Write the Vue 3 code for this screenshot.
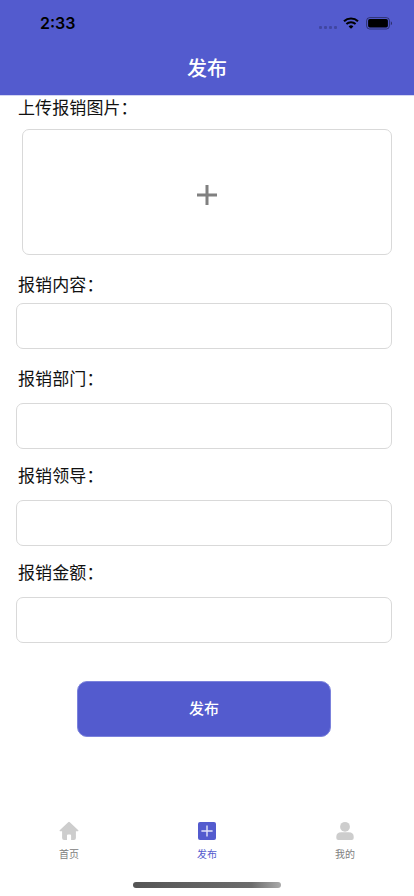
<script setup>
import { ref } from 'vue'

const fields = ref([
  { key: 'content', label: '报销内容', value: '' },
  { key: 'department', label: '报销部门', value: '' },
  { key: 'leader', label: '报销领导', value: '' },
  { key: 'amount', label: '报销金额', value: '' },
])
</script>

<template>
  <div class="page">
    <header class="header">
      <div class="status">
        <span class="time">2:33</span>
        <div class="signals">
          <div class="dots"><i v-for="n in 4" :key="n"></i></div>
          <svg class="wifi" viewBox="0 0 16 12" width="16" height="12">
            <path d="M1 4.3a10.2 10.2 0 0 1 14 0" fill="none" stroke="#000" stroke-width="2.1" />
            <path d="M3.4 7a6.8 6.8 0 0 1 9.2 0" fill="none" stroke="#000" stroke-width="2" />
            <path d="M8 11.8 5.6 9.4a3.5 3.5 0 0 1 4.8 0z" fill="#000" />
          </svg>
          <svg class="battery" viewBox="0 0 27 13" width="27" height="13">
            <rect x=".6" y=".6" width="22.8" height="11.4" rx="3.1" fill="none" stroke="#000" stroke-opacity=".45" />
            <rect x="2.1" y="2.1" width="19.8" height="8.4" rx="1.7" fill="#000" />
            <path d="M24.8 4.3a2.3 2.3 0 0 1 0 4z" fill="#000" fill-opacity=".5" />
          </svg>
        </div>
      </div>
      <h1 class="title">发布</h1>
    </header>

    <main class="form">
      <div class="label">上传报销图片<span class="colon">：</span></div>
      <div class="upload">
        <svg viewBox="0 0 20 20" width="20" height="20">
          <path d="M10 0v20M0 10h20" stroke="#808080" stroke-width="3" />
        </svg>
      </div>
      <div v-for="f in fields" :key="f.key" class="field" :class="f.key">
        <label class="label" :for="f.key">{{ f.label }}<span class="colon">：</span></label>
        <input :id="f.key" v-model="f.value" class="input" />
      </div>
      <button class="submit">发布</button>
    </main>

    <nav class="tabs">
      <div class="tab">
        <svg viewBox="0 0 20 20" width="20" height="20">
          <path d="M9.2 1.2a1.2 1.2 0 0 1 1.6 0l8.5 8.1q.6.8-.4.9h-2V17q0 2-2 2h-2.8v-4.6q0-1-1-1H9q-1 0-1 1V19H5.1q-2 0-2-2v-6.8h-2q-1-.1-.4-.9z" fill="#cdcdcd" />
        </svg>
        <span>首页</span>
      </div>
      <div class="tab active">
        <svg viewBox="0 0 20 20" width="20" height="20">
          <rect x="1" y=".9" width="18" height="18.2" rx="2" fill="#535bce" />
          <path d="M10 4.5v11M4.4 10h11.2" stroke="#e4e5fa" stroke-width="1.4" />
        </svg>
        <span>发布</span>
      </div>
      <div class="tab">
        <svg viewBox="0 0 20 20" width="20" height="20">
          <circle cx="10" cy="5.8" r="4.9" fill="#cdcdcd" />
          <path d="M1.3 17v-1.2q0-4.5 5-4.5h7.4q5 0 5 4.5V17q0 2-2 2H3.3q-2 0-2-2z" fill="#cdcdcd" />
        </svg>
        <span>我的</span>
      </div>
    </nav>
    <div class="home-bar"></div>
  </div>
</template>

<style>
body {
  background: #fff;
}
</style>

<style scoped>
.page {
  display: flex;
  flex-direction: column;
  width: 414px;
  height: 896px;
  overflow: hidden;
  background: #fff;
  color: #111;
  font-family: Inter, "Noto Sans CJK SC", sans-serif;
}
.header {
  height: 95px;
  flex: none;
  background: #535bce;
  border-bottom: 1px solid #d3d5f2;
  box-sizing: border-box;
  height: 96px;
}
.status {
  display: flex;
  justify-content: space-between;
  align-items: center;
  height: 46px;
  padding: 0 21px 0 40px;
}
.time {
  color: #000;
  font-size: 16px;
  font-weight: 600;
  line-height: 20px;
}
.signals {
  display: flex;
  align-items: center;
}
.dots {
  display: flex;
  gap: 2px;
  margin: 8px 6px 0 0;
}
.dots i {
  width: 3px;
  height: 3px;
  border-radius: 1px;
  background: #4046a2;
}
.wifi {
  margin-right: 7px;
}
.title {
  margin: 0;
  color: #fff;
  font-size: 20px;
  font-weight: 500;
  line-height: 46px;
  text-align: center;
}
.form {
  display: flex;
  flex-direction: column;
  flex: 1;
  padding: 0 22px 0 16px;
}
.label {
  display: block;
  padding-left: 2px;
  height: 24px;
  font-size: 17px;
  line-height: 24px;
  letter-spacing: 0.1px;
  white-space: nowrap;
}
.upload {
  display: flex;
  justify-content: center;
  align-items: center;
  height: 126px;
  margin: 9px 0 0 6px;
  padding-top: 5px;
  box-sizing: border-box;
  border: 1px solid #d9d9d9;
  border-radius: 7px;
}
.input {
  display: block;
  width: 100%;
  height: 46px;
  box-sizing: border-box;
  padding: 0 10px;
  border: 1px solid #d9d9d9;
  border-radius: 7px;
  background: #fff;
  font: inherit;
  outline: none;
}
.field {
  display: flex;
  flex-direction: column;
  gap: 12px;
  margin-top: 15px;
}
.field.content {
  gap: 6px;
  margin-top: 18px;
}
.field.department {
  margin-top: 18px;
}
.submit {
  width: 254px;
  height: 56px;
  margin: 38px 0 0 61px;
  border: 1px solid #7b82dc;
  border-radius: 10px;
  background: #535bce;
  color: #fff;
  font-family: inherit;
  font-size: 15px;
  font-weight: 500;
  line-height: 20px;
}
.tabs {
  display: flex;
  flex: none;
  height: 61px;
}
.tab {
  display: flex;
  flex: 1;
  flex-direction: column;
  align-items: center;
  gap: 5px;
  color: #808080;
  font-size: 10px;
  line-height: 16px;
}
.tab.active {
  color: #535bce;
}
.home-bar {
  flex: none;
  width: 148px;
  height: 6px;
  margin: 0 auto 8px;
  border-radius: 3px;
  background: linear-gradient(90deg, #555, #6c6c6c 80%, #aaa);
}
</style>
